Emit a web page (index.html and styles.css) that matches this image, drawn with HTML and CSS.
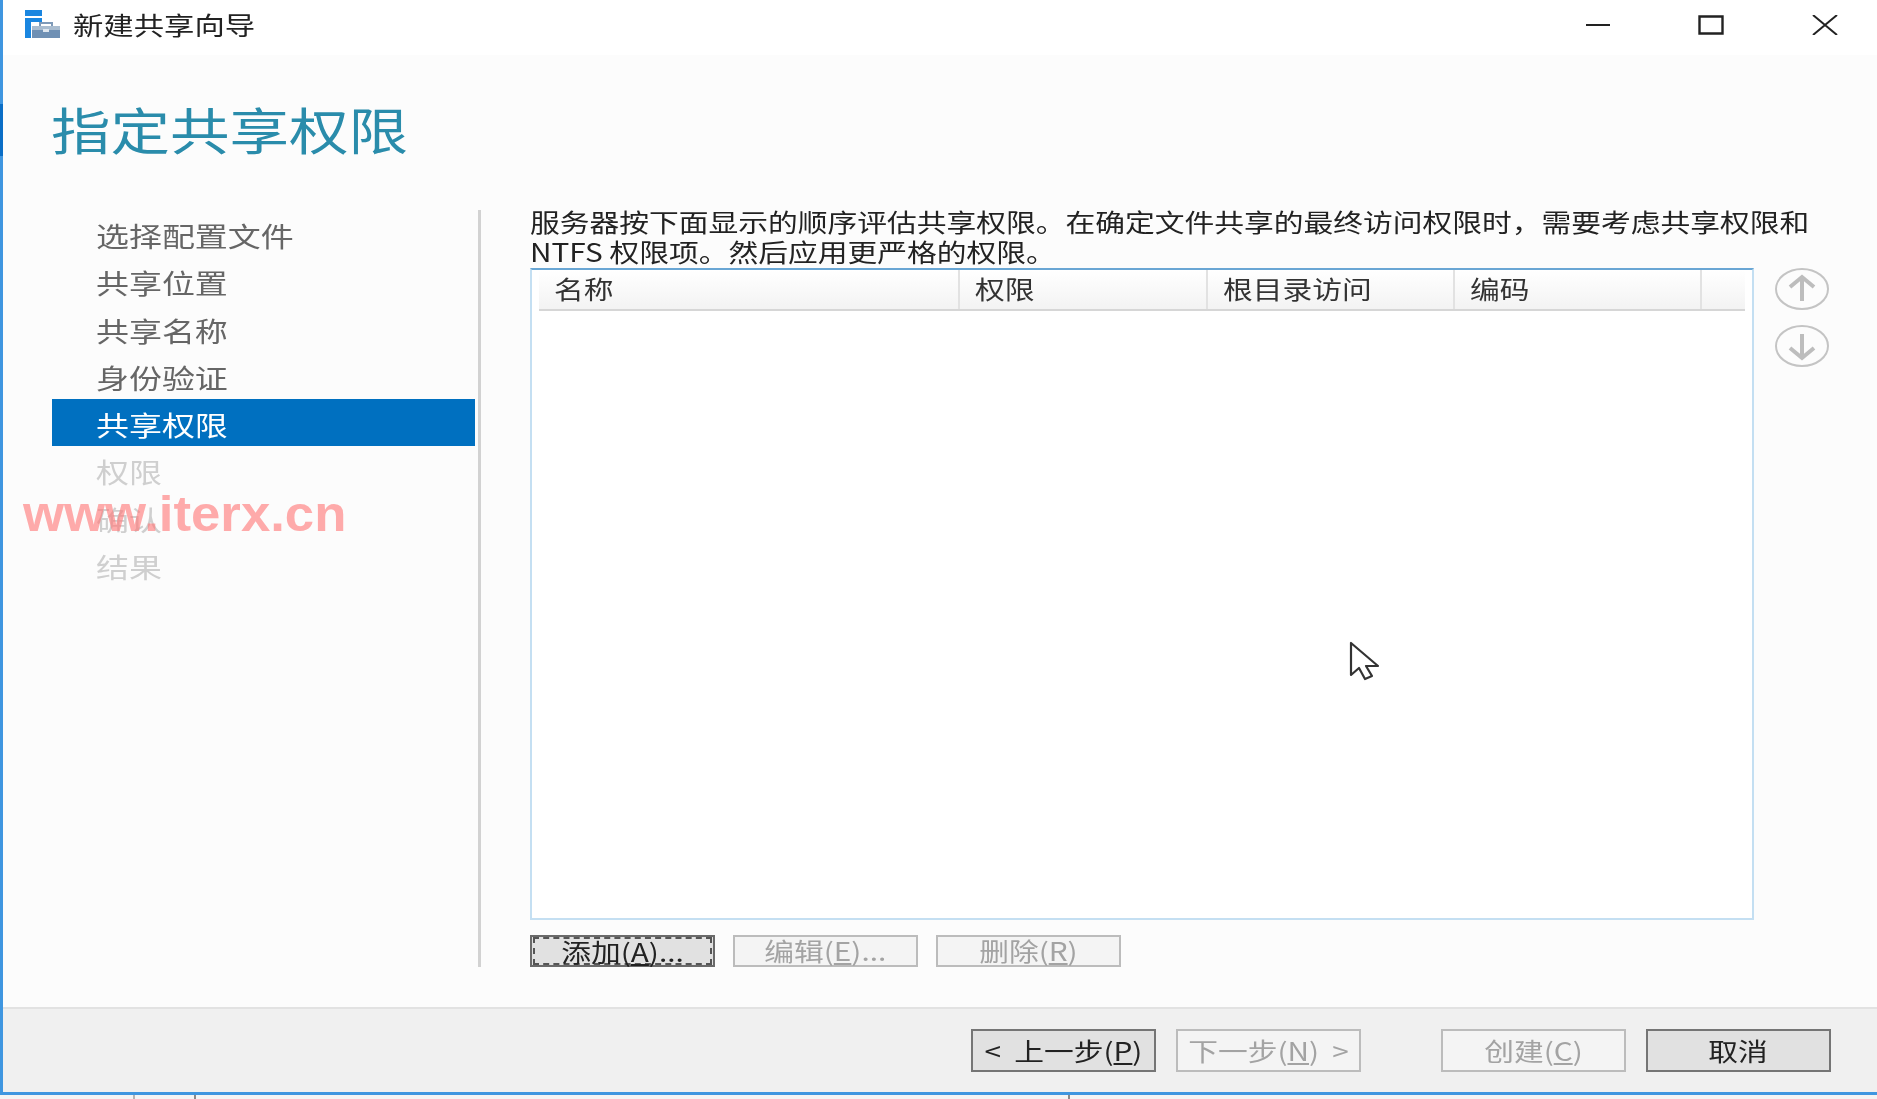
FILE: index.html
```html
<!DOCTYPE html>
<html lang="zh-CN">
<head>
<meta charset="utf-8">
<title>新建共享向导</title>
<link rel="stylesheet" href="styles.css">
</head>
<body>
<div class="window">
  <span class="edge-mark"></span>
  <header class="titlebar">
    <svg class="app-icon" viewBox="0 0 36 29" width="36" height="29">
      <path d="M0 0h17v6H0z" fill="#1a86e0"/>
      <path d="M0 8h17v4H6v16H0z" fill="#1a86e0"/>
      <path d="M7 16h28v12H7z" fill="#6f90b4"/>
      <path d="M7 16h28v4H7z" fill="#a9bccf"/>
      <path d="M15 16v-3h12v3" fill="none" stroke="#7f9ab8" stroke-width="2"/>
      <path d="M18 19h6v3h-6z" fill="#dfe7ef"/>
    </svg>
    <span class="st title-text">新建共享向导</span>
    <div class="controls">
      <svg class="ctl" width="24" height="20" viewBox="0 0 24 20"><path d="M0 10h24" stroke="#222" stroke-width="2" fill="none"/></svg>
      <svg class="ctl" width="26" height="20" viewBox="0 0 26 20"><path d="M1.500 1.500h23v17h-23z" stroke="#222" stroke-width="2.400" fill="none"/></svg>
      <svg class="ctl" width="26" height="20" viewBox="0 0 26 20"><path d="M1 0l24 20M25 0L1 20" stroke="#222" stroke-width="2" fill="none"/></svg>
    </div>
  </header>
  <main class="content">
    <h1 class="heading"><span class="st">指定共享权限</span></h1>
    <div class="columns">
      <nav class="nav">
        <div class="nav-item"><span class="st">选择配置文件</span></div>
        <div class="nav-item"><span class="st">共享位置</span></div>
        <div class="nav-item"><span class="st">共享名称</span></div>
        <div class="nav-item"><span class="st">身份验证</span></div>
        <div class="nav-item active"><span class="st">共享权限</span></div>
        <div class="nav-item off"><span class="st">权限</span></div>
        <div class="nav-item off"><span class="st">确认</span></div>
        <div class="nav-item off"><span class="st">结果</span></div>
      </nav>
      <div class="divider"></div>
      <section class="panel">
        <div class="desc">
          <div class="line"><span class="st">服务器按下面显示的顺序评估共享权限。在确定文件共享的最终访问权限时，需要考虑共享权限和</span></div>
          <div class="line"><span class="st">NTFS 权限项。然后应用更严格的权限。</span></div>
        </div>
        <div class="table-row">
          <div class="table">
            <div class="thead">
              <div class="th"><span class="st">名称</span></div>
              <div class="th"><span class="st">权限</span></div>
              <div class="th"><span class="st">根目录访问</span></div>
              <div class="th"><span class="st">编码</span></div>
              <div class="th"></div>
            </div>
          </div>
          <div class="arrows">
            <svg width="54" height="42" viewBox="0 0 54 42"><ellipse cx="27" cy="21" rx="26" ry="20" fill="#fcfcfc" stroke="#c4c4c4" stroke-width="2"/><path d="M27 33V10M15 19l12-10 12 10" fill="none" stroke="#bdbdbd" stroke-width="4"/></svg>
            <svg width="54" height="42" viewBox="0 0 54 42"><ellipse cx="27" cy="21" rx="26" ry="20" fill="#fcfcfc" stroke="#c4c4c4" stroke-width="2"/><path d="M27 9v23M15 23l12 10 12-10" fill="none" stroke="#bdbdbd" stroke-width="4"/></svg>
          </div>
        </div>
        <div class="btn-row">
          <button class="btn focus"><span class="focus-ring"><span class="st">添加(<u>A</u>)...</span></span></button>
          <button class="btn off"><span class="st">编辑(<u>E</u>)...</span></button>
          <button class="btn off"><span class="st">删除(<u>R</u>)</span></button>
        </div>
      </section>
    </div>
    <svg class="cursor" width="32" height="40" viewBox="0 0 32 40"><path d="M2 2v32l8-7 6 11 7-3-6-10h12z" fill="#fff" stroke="#333" stroke-width="2.200" stroke-linejoin="round"/></svg>
    <div class="watermark">www.iterx.cn</div>
  </main>
  <footer class="footer">
    <button class="btn big primary"><span class="st">&lt;&nbsp; 上一步(<u>P</u>)</span></button>
    <button class="btn big off next"><span class="st">下一步(<u>N</u>)&nbsp; &gt;</span></button>
    <button class="btn big off create"><span class="st">创建(<u>C</u>)</span></button>
    <button class="btn big primary cancel"><span class="st">取消</span></button>
  </footer>
</div>
<div class="strip"><span class="tick t1"></span><span class="tick t2"></span><span class="tick t3"></span></div>
</body>
</html>
```
FILE: styles.css
```css
* { box-sizing: border-box; }
html, body { margin: 0; padding: 0; height: 1099px; overflow: hidden; background: #f4f4f4; }
body { font-family: "Noto Sans CJK SC", "Liberation Sans", sans-serif; color: #222; }

.window {
  position: relative;
  height: 1095px;
  display: flex;
  flex-direction: column;
  border-left: 3px solid #3f96e0;
  border-bottom: 3px solid #3f96e0;
  background: #fff;
  filter: blur(0.6px);
}
.edge-mark { position: absolute; left: -3px; top: 104px; width: 3px; height: 52px; background: #0a6ec6; }

.st { display: inline-block; white-space: nowrap; transform: scaleX(1.19); transform-origin: left center; }

.titlebar { height: 55px; flex: none; display: flex; align-items: center; padding-left: 22px; background: #fff; }
.app-icon { margin-right: 12px; margin-top: -6px; }
.title-text { font-size: 25.500px; line-height: 30px; color: #222; margin-top: -7px; }
.controls { margin-left: auto; margin-right: 39px; margin-top: -5px; display: flex; align-items: center; gap: 88px; }

.content { position: relative; flex: 1; background: #fcfcfc; padding-left: 48px; }
.heading { margin: 0; height: 155px; padding-top: 35px; font-size: 50px; line-height: 76px; font-weight: 400; color: #2a8cab; }

.columns { display: flex; height: 757px; padding-left: 1px; }
.nav { width: 423px; display: grid; grid-auto-rows: 47.3px; align-content: start; }
.nav-item { padding-left: 44px; font-size: 27.700px; line-height: 50px; color: #666; }
.nav-item.active { background: #0070c0; color: #fff; }
.nav-item.off { color: #cfcfcf; }
.divider { width: 3px; margin-left: 3px; background: #d2d2d2; }

.panel { margin-left: 49px; width: 1310px; }
.desc { margin-top: -4px; height: 62px; font-size: 25px; line-height: 30px; color: #222; }
.table-row { display: flex; }
.table { width: 1224px; height: 652px; background: #fff; border: 2px solid #c4dff2; border-top-color: #69a6d4; padding: 0 7px; }
.thead { display: grid; grid-template-columns: 421px 248px 247px 247px 43px; height: 41px; border-bottom: 2px solid #d6d6d6; background: linear-gradient(#fff, #f3f3f3); }
.th { padding-left: 15px; font-size: 25px; line-height: 37px; color: #333; border-right: 2px solid #e2e2e2; }
.th:last-child { border-right: 0; }
.arrows { margin-left: 21px; display: flex; flex-direction: column; gap: 15px; }
.arrows svg { display: block; }

.btn-row { display: flex; gap: 18px; margin-top: 15px; }
.btn { width: 185px; height: 32px; padding: 0 0 2px; font: inherit; font-size: 25px; line-height: 26px; display: flex; align-items: center; justify-content: center; background: #e1e1e1; border: 2px solid #757575; color: #222; overflow: visible; }
.btn .st { transform-origin: center center; }
.btn.off { background: #f4f4f4; border-color: #bcbcbc; color: #a3a3a3; }
.btn.focus { border-color: #6a6a6a; padding: 0; }
.focus-ring { display: flex; align-items: center; justify-content: center; width: 100%; height: 100%; border: 2px dashed #555; margin: 1px; padding-bottom: 1px; }

.footer { flex: none; height: 85px; background: #f0f0f0; border-top: 2px solid #e2e2e2; display: flex; padding: 20px 0 0 968px; align-items: flex-start; }
.btn.big { height: 43px; }
.next { margin-left: 20px; }
.create { margin-left: 80px; }
.cancel { margin-left: 20px; }

.cursor { position: absolute; left: 1346px; top: 586px; }
.watermark { position: absolute; left: 20px; top: 429px; font-family: "Liberation Sans", sans-serif; font-weight: 700; font-size: 50px; line-height: 60px; color: rgba(255, 120, 120, 0.62); transform: scaleX(1.055); transform-origin: left center; }

.strip { display: flex; height: 4px; background: #f4f4f4; }
.tick { width: 2px; height: 4px; background: #b5b5b5; }
.t1 { margin-left: 133px; }
.t2 { margin-left: 59px; background: #8a8a8a; }
.t3 { margin-left: 872px; background: #8a8a8a; }
```
